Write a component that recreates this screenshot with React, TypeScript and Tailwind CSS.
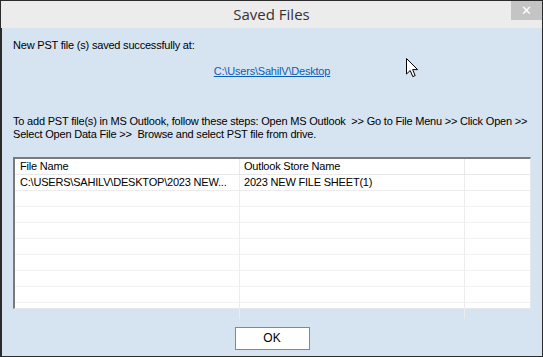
import React from 'react';

const rows = Array.from({ length: 8 });

function Cursor() {
    return (
        <svg width="13" height="20" viewBox="0 0 13 20" className="absolute left-[405px] top-[57px]">
            <path
                d="M0.5 0.5 L0.5 16 L4.2 12.5 L6.8 18.6 L9.2 17.6 L6.6 11.6 L11.6 11.6 Z"
                fill="white"
                stroke="black"
                strokeWidth="1"
                strokeLinejoin="miter"
            />
        </svg>
    );
}

export default function App() {
    return (
        <div className="relative flex h-[357px] w-[543px] flex-col overflow-hidden border border-[#2b2b2b] bg-[#d6e4f2] font-['Liberation_Sans',Arial,sans-serif] text-[11px] tracking-[-0.2px] text-black">
            {/* title bar */}
            <div className="relative flex h-[27px] shrink-0 items-center justify-center bg-[#ececec] tracking-normal">
                <span className="font-['Open_Sans',sans-serif] text-[15px] text-[#333]">Saved Files</span>
                <div className="absolute right-0 top-[-1px] flex h-[20px] w-[31px] items-center justify-center bg-[#c4c4c4] text-[13px] leading-none text-white">
                    ✕
                </div>
            </div>

            <div className="flex grow flex-col border-l border-[#2b2b2b] px-[11px]">
                <p className="mt-[11px] leading-[13px]">New PST file (s) saved successfully at:</p>
                <div className="mt-[11px] flex justify-center">
                    <span className="text-[#0b5cb5] underline">C:\Users\SahilV\Desktop</span>
                </div>

                <p className="mt-[35px] whitespace-nowrap leading-[13px]">
                    To add PST file(s) in MS Outlook, follow these steps: Open MS Outlook&nbsp; &gt;&gt; Go to File Menu &gt;&gt; Click Open &gt;&gt;
                    <br />
                    Select Open Data File &gt;&gt;&nbsp; Browse and select PST file from drive.
                </p>

                {/* table */}
                <div className="mt-[16px] h-[152px] border-t-2 border-l-2 border-r border-b border-t-[#7a7a7a] border-l-[#7a7a7a] border-r-[#e4e8ec] border-b-[#e4e8ec] bg-white">
                    <div className="grid h-[16px] grid-cols-[225px_225px_1fr] border-b border-[#e8e8e8]">
                        <div className="border-r border-[#e8e8e8] pl-[5px] leading-[15px]">File Name</div>
                        <div className="border-r border-[#e8e8e8] pl-[4px] leading-[15px]">Outlook Store Name</div>
                        <div />
                    </div>
                    <div className="grid h-[16px] grid-cols-[225px_225px_1fr] border-b border-[#ececec]">
                        <div className="whitespace-nowrap border-r border-[#ececec] pl-[5px] leading-[15px]">C:\USERS\SAHILV\DESKTOP\2023 NEW...</div>
                        <div className="border-r border-[#ececec] pl-[4px] leading-[15px]">2023 NEW FILE SHEET(1)</div>
                        <div />
                    </div>
                    {rows.map((_, i) => (
                        <div key={i} className="grid h-[16px] grid-cols-[225px_225px_1fr] border-b border-[#f0f0f0] last:border-b-0">
                            <div className="border-r border-[#ececec]" />
                            <div className="border-r border-[#ececec]" />
                            <div />
                        </div>
                    ))}
                </div>

                <div className="mt-[18px] flex justify-center">
                    <button className="h-[23px] w-[75px] border border-[#6f8cb0] bg-white text-[12px] leading-none tracking-normal">OK</button>
                </div>
            </div>

            <Cursor />
        </div>
    );
}
